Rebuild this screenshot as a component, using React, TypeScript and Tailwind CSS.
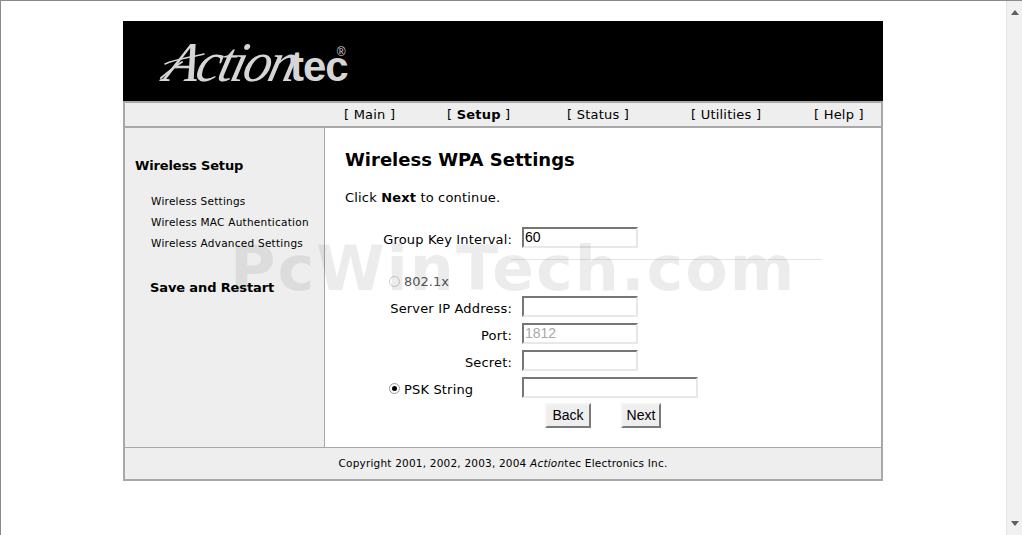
const NAV = [
  { label: 'Main', width: 'w-[103px]' },
  { label: 'Setup', width: 'w-[120px]', active: true },
  { label: 'Status', width: 'w-[124px]' },
  { label: 'Utilities', width: 'w-[123px]' },
  { label: 'Help', width: 'w-auto' },
];

const SIDE_LINKS = ['Wireless Settings', 'Wireless MAC Authentication', 'Wireless Advanced Settings'];

function Field({ value = '', wide = false, disabled = false }: { value?: string; wide?: boolean; disabled?: boolean }) {
  return (
    <input
      readOnly
      value={value}
      className={`${wide ? 'w-[176px]' : 'w-[116px]'} h-[21px] border-2 border-t-[#767676] border-l-[#767676] border-r-[#e8e8e8] border-b-[#e8e8e8] bg-white px-px font-['Liberation_Sans',sans-serif] text-[14px] outline-none ${disabled ? 'text-[#a8a8a8]' : 'text-black'}`}
    />
  );
}

function Radio({ checked = false, disabled = false }: { checked?: boolean; disabled?: boolean }) {
  return (
    <span className={`mr-[4px] flex h-[11px] w-[11px] -translate-y-[1px] items-center justify-center rounded-full border ${disabled ? 'border-[#cccccc]' : 'border-[#9a9a9a]'} bg-white`}>
      {checked && <span className="h-[5px] w-[5px] rounded-full bg-black" />}
    </span>
  );
}

function Row({ label, children }: { label: string; children: React.ReactNode }) {
  return (
    <div className="flex h-[27px] items-center">
      <span className="w-[177px] pt-[4px] pr-[10px] text-right tracking-[0.17px]">{label}</span>
      {children}
    </div>
  );
}

function PushButton({ label, width }: { label: string; width: string }) {
  return (
    <button className={`${width} h-[25px] border-2 border-t-[#f4f4f4] border-l-[#f4f4f4] border-r-[#7a7a7a] border-b-[#7a7a7a] bg-[#eeeeee] font-['Liberation_Sans',sans-serif] text-[14px] text-black`}>
      {label}
    </button>
  );
}

function Logo() {
  return (
    <div className="relative ml-[37px] flex items-baseline pt-[13px] leading-none text-[#d6d6d6]">
      <svg className="absolute top-[27px] left-0" width="60" height="32" viewBox="0 0 60 32" fill="none" stroke="#d6d6d6" strokeLinecap="round">
        <path d="M1 30C8 24 14 19 22 14" strokeWidth="2" />
        <path d="M5 16C16 11 28 10 44 6" strokeWidth="1.5" />
      </svg>
      <span className="inline-block w-[130px] origin-bottom-left -skew-x-[14deg] font-['Liberation_Serif',serif] text-[56px] tracking-[-3px] whitespace-nowrap italic">Action</span>
      <span className="font-['Liberation_Sans',sans-serif] text-[42px] font-bold tracking-[-1px]">tec</span>
      <span className="-ml-[11px] -mt-[8px] self-start pt-[20px] font-['Liberation_Sans',sans-serif] text-[12px]">®</span>
    </div>
  );
}

export default function App() {
  return (
    <div className="relative flex h-[535px] w-[1022px] overflow-hidden border-t border-l border-[#8a8a8a] bg-white font-['DejaVu_Sans',sans-serif] text-[13px] text-black">
      <div className="flex-1 pt-[20px] pl-[122px]">
        <div className="w-[760px] border-x-2 border-b-2 border-[#a8a8a8]">
          {/* Header */}
          <div className="-mx-[2px] h-[80px] overflow-hidden bg-black">
            <Logo />
          </div>

          {/* Top nav */}
          <div className="flex h-[27px] items-center border-y-2 border-[#a8a8a8] bg-[#eeeeee] pl-[219px] tracking-[0.22px]">
            {NAV.map((n) => (
              <span key={n.label} className={`${n.width} whitespace-pre`}>
                [ <span className={n.active ? 'font-bold' : ''}>{n.label}</span> ]
              </span>
            ))}
          </div>

          <div className="flex h-[319px]">
            {/* Sidebar */}
            <div className="w-[200px] shrink-0 border-r border-[#a8a8a8] bg-[#eeeeee]">
              <p className="mt-[28px] pl-[10px] text-[13px] font-bold tracking-[-0.15px]">Wireless Setup</p>
              <div className="mt-[15px] pl-[26px] text-[10.5px] tracking-[0.25px]">
                {SIDE_LINKS.map((l) => (
                  <p key={l} className="h-[21px] leading-[21px]">{l}</p>
                ))}
              </div>
              <p className="mt-[24px] pl-[25px] text-[13px] font-bold tracking-[-0.12px]">Save and Restart</p>
            </div>

            {/* Main */}
            <div className="flex-1 pl-[20px]">
              <h1 className="mt-[20px] text-[18px] font-bold leading-[24px]">Wireless WPA Settings</h1>
              <p className="mt-[16px] leading-[20px] tracking-[0.17px]">
                Click <b>Next</b> to continue.
              </p>
              <div className="mt-[16px]">
                <Row label="Group Key Interval:">
                  <Field value="60" />
                </Row>
                <div className="mt-[21px] flex h-[20px] items-center pl-[44px] text-[#555555]">
                  <Radio disabled />
                  <span>802.1x</span>
                </div>
                <div className="mt-[1px]">
                  <Row label="Server IP Address:"><Field /></Row>
                  <Row label="Port:"><Field value="1812" disabled /></Row>
                  <Row label="Secret:"><Field /></Row>
                  <div className="flex h-[27px] items-center">
                    <div className="flex w-[177px] items-center pl-[44px] pt-[4px] tracking-[0.17px]">
                      <Radio checked />
                      <span>PSK String</span>
                    </div>
                    <Field wide />
                  </div>
                </div>
                <div className="mt-[2px] flex gap-[30px] pl-[200px]">
                  <PushButton label="Back" width="w-[46px]" />
                  <PushButton label="Next" width="w-[40px]" />
                </div>
              </div>
            </div>
          </div>

          {/* Footer */}
          <div className="flex h-[32px] items-center justify-center border-t border-[#a8a8a8] bg-[#eeeeee] text-[10.5px] tracking-[0.2px]">
            Copyright 2001, 2002, 2003, 2004&nbsp;<i>Action</i>tec Electronics Inc.
          </div>
        </div>
      </div>

      {/* Scrollbar */}
      <div className="flex w-[16px] shrink-0 flex-col items-center justify-between border-l border-[#e4e4e4] bg-[#f1f1f1] py-[9px]">
        <svg width="8" height="5" viewBox="0 0 8 5"><path d="M4 0 8 5H0Z" fill="#606060" /></svg>
        <svg width="8" height="5" viewBox="0 0 8 5"><path d="M0 0H8L4 5Z" fill="#606060" /></svg>
      </div>

      {/* Watermark */}
      <div className="pointer-events-none absolute top-[233px] left-[229px] font-['DejaVu_Sans',sans-serif] text-[62px] leading-[70px] font-bold tracking-[2px] whitespace-nowrap text-black/[0.075]">
        PcWinTech.com
      </div>
      <div className="pointer-events-none absolute top-[258px] left-[510px] h-px w-[311px] bg-black/[0.1]" />
    </div>
  );
}
